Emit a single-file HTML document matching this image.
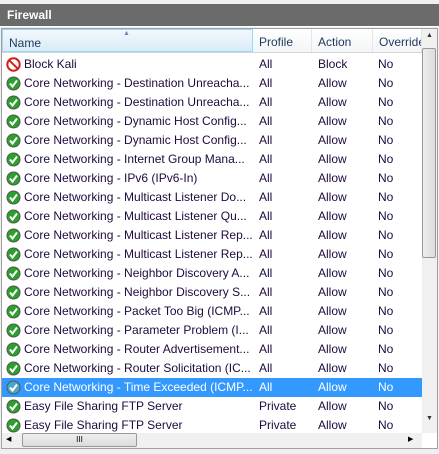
<!DOCTYPE html><html><head><style>
body{margin:0;width:439px;height:454px;background:#f0f0f0;position:relative;overflow:hidden;font-family:"Liberation Sans",sans-serif;font-size:12px}
.title{position:absolute;left:0;top:4px;width:439px;height:23px;background:#6b6b6b;color:#fff;font-weight:bold;font-size:12px;line-height:23px;padding-left:7px;box-sizing:border-box;border-bottom:1px solid #fff}
.list{position:absolute;left:1px;top:28px;width:437px;height:421px;background:#fff;border:1px solid #a0a0a0;box-sizing:border-box}
.hdr{position:absolute;left:0;top:0;height:23px;width:420px;background:linear-gradient(#fff,#f3f5f7);border-bottom:1px solid #d5d5d5}
.hdr div{position:absolute;top:0;height:23px;line-height:26px;color:#1e395b;padding-left:6px;box-sizing:border-box;border-right:1px solid #e3e6ea}
.row{position:absolute;left:0;width:420px;height:19px;line-height:19px;color:#1e0a3c}
.row span{position:absolute;white-space:nowrap;overflow:hidden}
.sel{background:#3399ff;color:#fff}
.ic{position:absolute;left:4px;top:2px;width:15px;height:15px}
.vs{position:absolute;left:420px;top:0;width:15px;height:404px;background:#f0f0f0}
.hs{position:absolute;left:0;top:404px;width:420px;height:15px;background:#f0f0f0}
</style></head><body>
<div class="title">Firewall</div>
<div class="list">
<div class="hdr">
<div style="left:0;width:251px;background:linear-gradient(#f2f9fd,#d9ebf6);border:1px solid #96d9f9">Name<span style="position:absolute;left:120px;top:-9px;font-size:7px;color:#6d8bb5">▲</span></div>
<div style="left:251px;width:59px">Profile</div>
<div style="left:310px;width:61px">Action</div>
<div style="left:371px;width:49px;overflow:hidden">Override</div>
</div>
<div id="rows"></div>
<div class="vs"><div style="position:absolute;left:0;top:19px;width:14px;height:210px;background:linear-gradient(90deg,#eee,#dcdcdc);border:1px solid #999;border-radius:2px;box-sizing:border-box"></div><div style="position:absolute;left:4px;top:3px;font-size:7px;color:#333">▲</div><div style="position:absolute;left:4px;top:386px;font-size:7px;color:#333">▼</div></div>
<div class="hs"><div style="position:absolute;left:20px;top:0;width:115px;height:14px;background:linear-gradient(#eee,#dcdcdc);border:1px solid #999;border-radius:2px;box-sizing:border-box;text-align:center;font-size:8px;line-height:12px">III</div><div style="position:absolute;left:4px;top:2px;font-size:7px">◀</div><div style="position:absolute;left:406px;top:2px;font-size:7px">▶</div></div>
</div>
<script>
var d=[["Block Kali","All","Block",1],["Core Networking - Destination Unreacha...","All","Allow"],["Core Networking - Destination Unreacha...","All","Allow"],["Core Networking - Dynamic Host Config...","All","Allow"],["Core Networking - Dynamic Host Config...","All","Allow"],["Core Networking - Internet Group Mana...","All","Allow"],["Core Networking - IPv6 (IPv6-In)","All","Allow"],["Core Networking - Multicast Listener Do...","All","Allow"],["Core Networking - Multicast Listener Qu...","All","Allow"],["Core Networking - Multicast Listener Rep...","All","Allow"],["Core Networking - Multicast Listener Rep...","All","Allow"],["Core Networking - Neighbor Discovery A...","All","Allow"],["Core Networking - Neighbor Discovery S...","All","Allow"],["Core Networking - Packet Too Big (ICMP...","All","Allow"],["Core Networking - Parameter Problem (I...","All","Allow"],["Core Networking - Router Advertisement...","All","Allow"],["Core Networking - Router Solicitation (IC...","All","Allow"],["Core Networking - Time Exceeded (ICMP...","All","Allow",0,1],["Easy File Sharing FTP Server","Private","Allow"],["Easy File Sharing FTP Server","Private","Allow"]];
var h="";d.forEach(function(r,i){var ic=r[3]?'<svg class="ic" viewBox="0 0 15 15"><circle cx="7.5" cy="7.5" r="6.2" fill="#fff" stroke="#d21f1f" stroke-width="2"/><line x1="3.3" y1="3.3" x2="11.7" y2="11.7" stroke="#d21f1f" stroke-width="2"/></svg>':'<svg class="ic" viewBox="0 0 15 15"><circle cx="7.5" cy="7.5" r="7" fill="#555"/><circle cx="7.5" cy="7.5" r="6" fill="'+(r[4]?'#4aa6c8':'#2aa12a')+'"/><path d="M4 7.5l2.5 3 4.5-6" fill="none" stroke="#fff" stroke-width="2"/></svg>';
h+='<div class="row'+(r[4]?' sel':'')+'" style="top:'+(26+i*19)+'px">'+ic+'<span style="left:22px;width:228px">'+r[0]+'</span><span style="left:257px">'+r[1]+'</span><span style="left:316px">'+r[2]+'</span><span style="left:376px">No</span></div>';});
document.getElementById("rows").innerHTML=h;
</script>
</body></html>
